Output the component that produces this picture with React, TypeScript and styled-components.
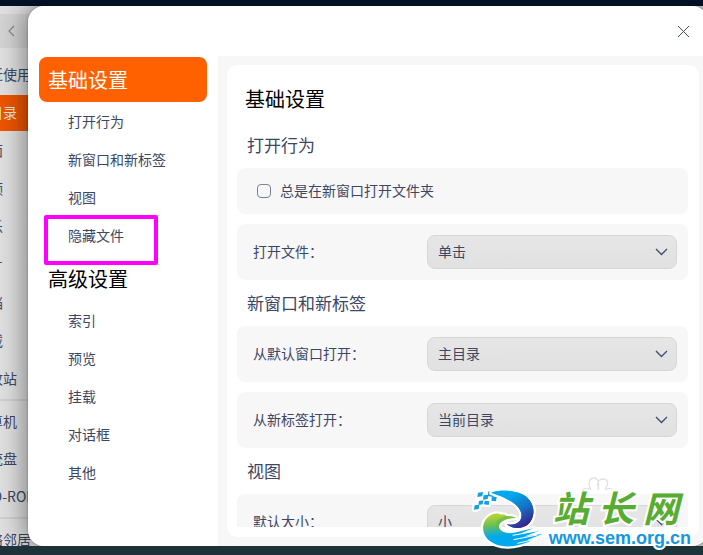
import React from "react";
import styled, { createGlobalStyle, css } from "styled-components";

const GlobalStyle = createGlobalStyle`
  * { box-sizing: border-box; }
  body {
    margin: 0;
    overflow: hidden;
    color: #3d4663;
    font: 14px/20px "Noto Sans CJK SC", sans-serif;
  }
  h1, h2, ul { margin: 0; padding: 0; font-weight: 400; }
  ul { list-style: none; }
  button, select, input { margin: 0; font: inherit; color: inherit; }
  a { color: inherit; text-decoration: none; }
`;

const Desktop = styled.div`
  position: relative;
  height: 100vh;
  overflow: hidden;
  background: linear-gradient(#001126 0, #001126 40px, #1e3239 90%);
`;

/* File manager behind the dialog, partly past the left screen edge */
const FileManager = styled.div`
  position: absolute;
  inset: 6px 0 9px -60px;
  overflow: hidden;
  padding-top: 8px;
  background: #e0e0e0;
`;

const PathBar = styled.div`
  display: flex;
  align-items: center;
  height: 34px;
  padding-left: 64px;
  background: #d4d4d4;
`;

const BackButton = styled.button`
  display: flex;
  padding: 0;
  border: 0;
  background: none;
  color: #85878f;
`;

const Places = styled.ul`
  padding-top: 9px;
`;

const Place = styled.li<{ $active?: boolean; $divided?: boolean }>`
  display: flex;
  align-items: center;
  height: 36px;
  margin-bottom: 2px;
  padding: 0 0 2px 35px;
  white-space: nowrap;
  ${(p) => p.$active && css`background: #ee5500; color: #f4e6de;`}
  ${(p) => p.$divided && css`
    height: 40px;
    padding-top: 4px;
    border-top: 2px solid #d0d0d0;
  `}
`;

const Dialog = styled.section`
  position: absolute;
  inset: 6px -5px 9px 28px;
  display: flex;
  flex-direction: column;
  overflow: hidden;
  border-radius: 16px;
  background: #fff;
`;

const DialogShade = styled.div`
  position: absolute;
  inset: 6px -5px 9px 28px;
  border-radius: 16px;
  box-shadow: 0 0 28px 2px rgba(0, 0, 0, 0.48), 0 0 1px 1px rgba(0, 0, 0, 0.12);
`;

const ShadeClip = styled.div`
  position: absolute;
  inset: 0;
  overflow: hidden;
  clip-path: inset(6px 0 9px 0);
`;

const TitleBar = styled.header`
  display: flex;
  flex: none;
  align-items: center;
  justify-content: flex-end;
  height: 50px;
  padding-right: 18px;
`;

const CloseButton = styled.button`
  display: flex;
  padding: 0;
  border: 0;
  background: none;
  color: #414a70;
`;

const Body = styled.div`
  display: flex;
  flex: 1;
  min-height: 0;
`;

const Sidebar = styled.nav`
  flex: none;
  width: 190px;
  padding: 1px 11px;
`;

const GroupButton = styled.button<{ $active?: boolean }>`
  display: block;
  width: 100%;
  height: 45px;
  padding: 0 9px;
  border: 0;
  border-radius: 8px;
  font-size: 20px;
  text-align: left;
  background: ${(p) => (p.$active ? "#ff6000" : "transparent")};
  color: ${(p) => (p.$active ? "#fff" : "#000")};
`;

const GroupItems = styled.ul`
  padding-bottom: 2px;
`;

const Item = styled.li`
  position: relative;
`;

const ItemLink = styled.a`
  display: block;
  padding-left: 29px;
  line-height: 38px;
`;

const Marker = styled.span`
  position: absolute;
  inset: -1px 49px -11px 5px;
  border: 4px solid #ff00ff;
  border-radius: 2px;
  pointer-events: none;
`;

const Content = styled.div`
  flex: 1;
  min-width: 0;
  padding: 9px;
  background: #f7f7f7;
`;

const Panel = styled.main`
  height: 100%;
  padding: 0 11px 10px 10px;
  border-radius: 10px;
  background: #fff;
`;

const ScrollArea = styled.div`
  height: 100%;
  overflow-y: auto;
  scrollbar-width: none;
`;

const PageTitle = styled.h1`
  padding: 11px 8px 1px;
  font-size: 20px;
  line-height: 45px;
  color: #000;
`;

const SectionTitle = styled.h2`
  padding-left: 10px;
  font-size: 17px;
  line-height: 46px;
`;

const Cards = styled.div`
  display: grid;
  gap: 10px;
`;

const CheckCard = styled.label`
  display: flex;
  align-items: center;
  gap: 9px;
  height: 46px;
  padding: 0 20px;
  border-radius: 8px;
  background: #f7f7f7;
`;

const CardText = styled.span`
  padding-bottom: 2px;
`;

const CheckBox = styled.input`
  appearance: none;
  width: 14px;
  height: 14px;
  border: 1px solid #7b8296;
  border-radius: 4px;
  background: #f7f7f7;
  &:checked { background: #ff6000; }
`;

const FieldCard = styled.div`
  display: flex;
  align-items: center;
  justify-content: space-between;
  height: 56px;
  padding: 0 11px 0 16px;
  border-radius: 8px;
  background: #f7f7f7;
`;

const FieldLabel = styled.label`
  padding-bottom: 2px;
`;

const SelectBox = styled.div`
  display: grid;
  align-items: center;
  width: 250px;
  & > * { grid-area: 1 / 1; }
  svg { justify-self: end; margin-right: 9px; pointer-events: none; }
`;

const Select = styled.select`
  appearance: none;
  width: 100%;
  height: 34px;
  padding: 0 30px 2px 10px;
  border: 1px solid #d7d7d7;
  border-radius: 8px;
  background: linear-gradient(#e6e6e6, #e1e1e1);
`;

const Watermark = styled.div`
  position: absolute;
  right: 12px;
  bottom: 5px;
  display: flex;
  align-items: flex-end;
  pointer-events: none;
  font-weight: 700;
`;

const WatermarkText = styled.div`
  display: grid;
  -webkit-text-stroke: 4px #fff;
  paint-order: stroke fill;
`;

const SiteName = styled.div`
  display: flex;
  justify-content: space-between;
  padding: 0 12px 0 4px;
  font-size: 36px;
  font-style: italic;
  line-height: 40px;
  color: #57ac31;
`;

const SiteUrl = styled.div`
  font-family: "Liberation Sans", sans-serif;
  font-size: 18px;
  line-height: 24px;
  color: #1597e0;
`;

const Swirl = styled.svg`
  flex: none;
  margin-right: -8px;
`;

const Petals = styled.svg`
  position: absolute;
  right: 78px;
  bottom: 57px;
`;

const places = [
  { name: "最近使用" },
  { name: "主目录", active: true },
  { name: "桌面" },
  { name: "视频" },
  { name: "音乐" },
  { name: "图片" },
  { name: "文档" },
  { name: "下载" },
  { name: "回收站" },
  { name: "计算机", divided: true },
  { name: "系统盘" },
  { name: "DVD-ROM" },
  { name: "网络邻居", divided: true },
];

const groups = [
  { title: "基础设置", active: true, items: ["打开行为", "新窗口和新标签", "视图", "隐藏文件"] },
  { title: "高级设置", active: false, items: ["索引", "预览", "挂载", "对话框", "其他"] },
];

function Field({ id, label, options }: { id: string; label: string; options: string[] }) {
  return (
    <FieldCard>
      <FieldLabel htmlFor={id}>{label}</FieldLabel>
      <SelectBox>
        <Select id={id}>
          {options.map((o) => <option key={o}>{o}</option>)}
        </Select>
        <svg width="13" height="8" viewBox="0 0 13 8" fill="none" stroke="#454e6c" strokeWidth="1.4">
          <path d="M1 1l5.5 5.5L12 1" />
        </svg>
      </SelectBox>
    </FieldCard>
  );
}

function SiteMark() {
  return (
    <Watermark>
      <Petals width="32" height="16" viewBox="0 0 32 16" fill="none" stroke="#e2e2e2" strokeWidth="1.3">
        <path d="M1 14c2-3 5-3 8-2M10 13C6 5 9 1 13 1s6 5 4 12M18 12c-3-6 0-10 4-10s7 4 2 10M25 13c2-2 4-2 6-1" />
      </Petals>
      <Swirl width="90" height="66" viewBox="0 0 270 198">
        <defs>
          <linearGradient id="crest" x1="0" y1="0" x2="0.7" y2="1">
            <stop offset="0.3" stopColor="#00a9ee" />
            <stop offset="0.65" stopColor="#1474c6" />
            <stop offset="1" stopColor="#34258d" />
          </linearGradient>
          <linearGradient id="wave" x1="0.1" y1="0" x2="0.35" y2="1">
            <stop offset="0.1" stopColor="#b0d136" />
            <stop offset="0.35" stopColor="#6abf58" />
            <stop offset="0.68" stopColor="#00a9ee" />
          </linearGradient>
        </defs>
        <g stroke="#fff" strokeWidth="14" strokeLinejoin="round" paintOrder="stroke">
          <path d="M33 26l15-2-2 13-15 2zM50 34l14-2-2 13-14 2zM64 22l18 3-3 14-17-3zM75 37l14 2-2 13-14-2zM53 50l14 2-2 11-14-2zM36 51l13-2-2 12-13 2zM23 64l14-2-2 13-14 2z" fill="#149fe0" />
          <path d="M73 26C103 15 160 20 181 41C207 65 204 105 181 123C158 138 132 132 119 121C151 126 167 109 163 88C158 65 129 44 73 26Z" fill="url(#crest)" />
          <path d="M53 112C63 94 83 85 97 90C104 94 111 88 119 96C128 98 136 95 147 102C116 101 94 115 96 130C101 148 130 151 151 144L198 133L159 149L220 139L171 158L228 149L181 168L199 167C161 185 119 194 86 181C52 168 41 137 53 112Z" fill="url(#wave)" />
        </g>
        <path d="M119 96c9 2 17-1 28 6c-51-1-64 27-39 43c-36-18-23-40 11-49z" fill="#61bd42" opacity="0.7" />
        <path d="M73 26C103 15 160 20 181 41C207 65 204 105 181 123C158 138 132 132 119 121C151 126 167 109 163 88C158 65 129 44 73 26Z" fill="url(#crest)" />
        <path d="M137 154l83-15M140 167l71-14M151 178l48-11" stroke="#fff" strokeWidth="3" />
      </Swirl>
      <WatermarkText>
        <SiteName><span>站</span><span>长</span><span>网</span></SiteName>
        <SiteUrl>www.sem.org.cn</SiteUrl>
      </WatermarkText>
    </Watermark>
  );
}

export default function App() {
  return (
    <Desktop>
      <GlobalStyle />
      <FileManager>
        <PathBar>
          <BackButton aria-label="后退">
            <svg width="14" height="12" viewBox="0 0 14 12" fill="none" stroke="currentColor" strokeWidth="1.2">
              <path d="M10 1L5 6l5 5" />
            </svg>
          </BackButton>
        </PathBar>
        <Places>
          {places.map((p) => (
            <Place key={p.name} $active={p.active} $divided={p.divided}>{p.name}</Place>
          ))}
        </Places>
      </FileManager>
      <ShadeClip><DialogShade /></ShadeClip>
      <Dialog role="dialog" aria-label="设置">
        <TitleBar>
          <CloseButton aria-label="关闭">
            <svg width="13" height="13" viewBox="0 0 13 13" fill="none" stroke="currentColor">
              <path d="M1 1l11 11M12 1L1 12" />
            </svg>
          </CloseButton>
        </TitleBar>
        <Body>
          <Sidebar>
            {groups.map((g) => (
              <React.Fragment key={g.title}>
                <GroupButton $active={g.active}>{g.title}</GroupButton>
                <GroupItems>
                  {g.items.map((name) => (
                    <Item key={name}>
                      <ItemLink href="#">{name}</ItemLink>
                      {name === "隐藏文件" && <Marker />}
                    </Item>
                  ))}
                </GroupItems>
              </React.Fragment>
            ))}
          </Sidebar>
          <Content>
            <Panel>
              <ScrollArea>
                <PageTitle>基础设置</PageTitle>
                <SectionTitle>打开行为</SectionTitle>
                <Cards>
                  <CheckCard>
                    <CheckBox type="checkbox" />
                    <CardText>总是在新窗口打开文件夹</CardText>
                  </CheckCard>
                  <Field id="open-file" label="打开文件：" options={["单击", "双击"]} />
                </Cards>
                <SectionTitle>新窗口和新标签</SectionTitle>
                <Cards>
                  <Field id="new-window" label="从默认窗口打开：" options={["主目录", "当前目录"]} />
                  <Field id="new-tab" label="从新标签打开：" options={["当前目录", "主目录"]} />
                </Cards>
                <SectionTitle>视图</SectionTitle>
                <Cards>
                  <Field id="icon-size" label="默认大小：" options={["小", "中", "大"]} />
                </Cards>
              </ScrollArea>
            </Panel>
          </Content>
        </Body>
      </Dialog>
      <SiteMark />
    </Desktop>
  );
}
